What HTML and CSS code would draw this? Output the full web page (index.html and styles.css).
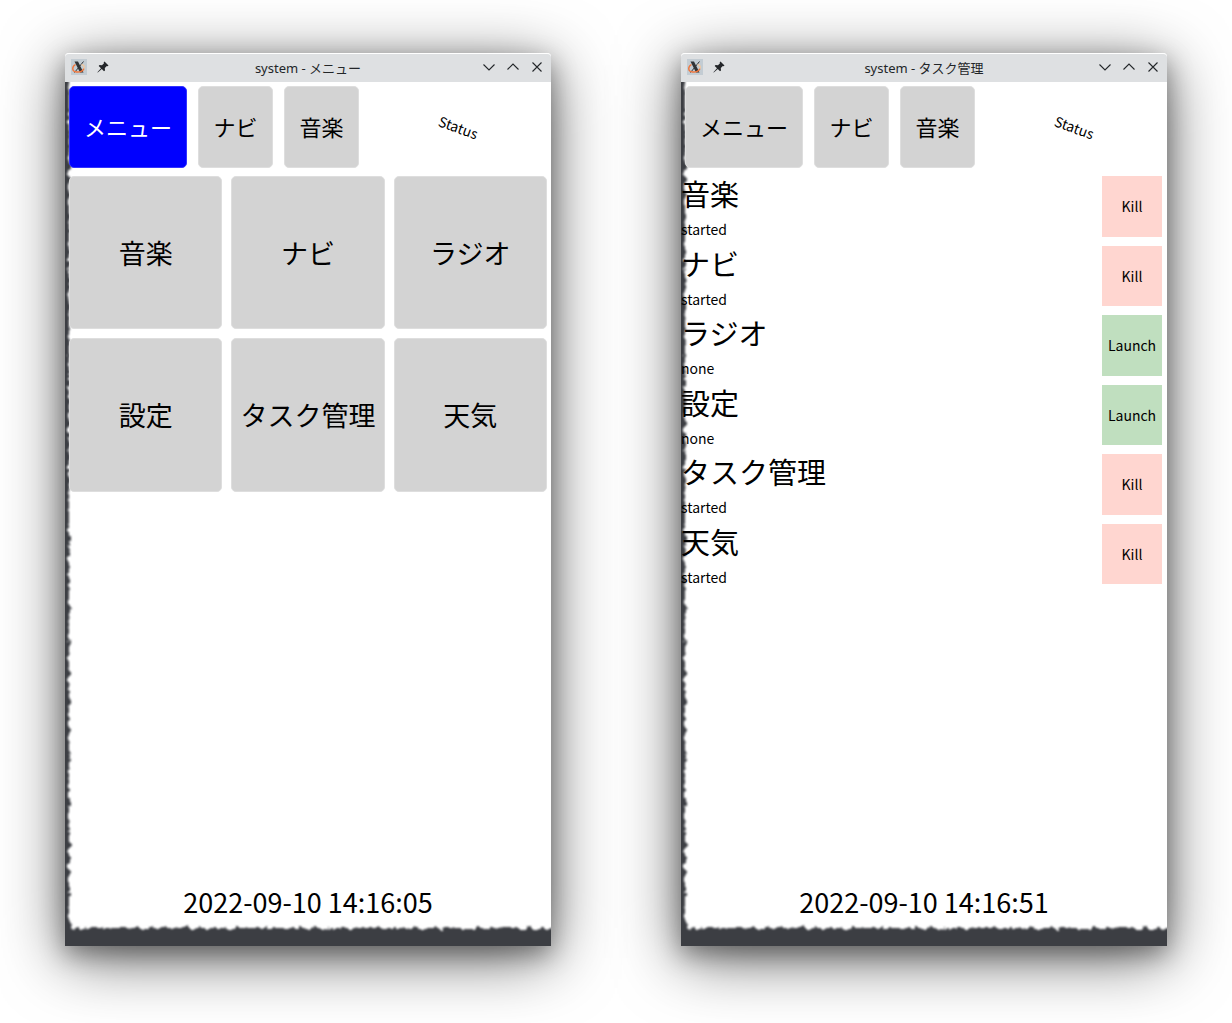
FILE: index.html
```html
<!DOCTYPE html>
<html lang="ja">
<head>
<meta charset="utf-8">
<title>system</title>
<link rel="stylesheet" href="styles.css">
</head>
<body>
<svg class="defs" width="0" height="0" aria-hidden="true">
  <defs>
    <filter id="torn" x="-5%" y="-5%" width="110%" height="110%" color-interpolation-filters="sRGB">
      <feTurbulence type="fractalNoise" baseFrequency="0.14" numOctaves="3" seed="7" result="n"/>
      <feDisplacementMap in="SourceGraphic" in2="n" scale="8" xChannelSelector="R" yChannelSelector="G"/>
      <feGaussianBlur stdDeviation="0.9"/>
    </filter>
    <symbol id="xlogo" viewBox="0 0 16 16">
      <rect width="16" height="16" fill="#c3ccd3"/>
      <path d="M3.500 2.500h3.500l5.500 11h-3.500z" fill="#303336"/>
      <path d="M12.500 2.500L3.500 13.500" stroke="#303336" stroke-width="1"/>
      <path d="M4.500 5.500C.5 8 .8 12.500 5.500 13C9 13.300 12 12 13 9.500" fill="none" stroke="#f0763c" stroke-width="1.400"/>
      <path d="M10.500 5.500Q14 6.500 13 9.500" fill="none" stroke="#edc9a5" stroke-width="1.600"/>
    </symbol>
    <symbol id="pin" viewBox="0 0 12 12">
      <path d="M7.500 .5L11.500 4.500L10.500 5.300L9.800 5L7.800 7L8 9.500L7 10.300L4.800 8L.8 11.500L.4 11.200L4 7.200L1.700 5L2.500 4L5 4.200L7 2.200L6.700 1.300Z" fill="#232629"/>
    </symbol>
    <symbol id="down" viewBox="0 0 12 12"><path d="M.5 3.500L6 9L11.500 3.500" fill="none" stroke="#232629" stroke-width="1.100"/></symbol>
    <symbol id="up" viewBox="0 0 12 12"><path d="M.5 8.500L6 3L11.500 8.500" fill="none" stroke="#232629" stroke-width="1.100"/></symbol>
    <symbol id="close" viewBox="0 0 12 12"><path d="M1.500 1.500L10.500 10.500M10.500 1.500L1.500 10.500" fill="none" stroke="#232629" stroke-width="1.100"/></symbol>
  </defs>
</svg>
<main class="stage">
  <section class="window">
    <header class="titlebar">
      <div class="title-icons">
        <svg class="logo" aria-hidden="true"><use href="#xlogo"/></svg>
        <button class="icon-btn" aria-label="Pin"><svg class="icon"><use href="#pin"/></svg></button>
      </div>
      <h1 class="title">system - メニュー</h1>
      <div class="title-controls">
        <button class="icon-btn" aria-label="Minimize"><svg class="icon"><use href="#down"/></svg></button>
        <button class="icon-btn" aria-label="Maximize"><svg class="icon"><use href="#up"/></svg></button>
        <button class="icon-btn" aria-label="Close"><svg class="icon"><use href="#close"/></svg></button>
      </div>
    </header>
    <div class="body">
      <nav class="tabs">
        <button class="tab active">メニュー</button>
        <button class="tab">ナビ</button>
        <button class="tab">音楽</button>
        <div class="status"><span class="status-text">Status</span></div>
      </nav>
      <div class="tiles">
        <button class="tile">音楽</button>
        <button class="tile">ナビ</button>
        <button class="tile">ラジオ</button>
        <button class="tile">設定</button>
        <button class="tile">タスク管理</button>
        <button class="tile">天気</button>
      </div>
      <footer class="clock"><time>2022-09-10 14:16:05</time></footer>
    </div>
  </section>
  <section class="window">
    <header class="titlebar">
      <div class="title-icons">
        <svg class="logo" aria-hidden="true"><use href="#xlogo"/></svg>
        <button class="icon-btn" aria-label="Pin"><svg class="icon"><use href="#pin"/></svg></button>
      </div>
      <h1 class="title">system - タスク管理</h1>
      <div class="title-controls">
        <button class="icon-btn" aria-label="Minimize"><svg class="icon"><use href="#down"/></svg></button>
        <button class="icon-btn" aria-label="Maximize"><svg class="icon"><use href="#up"/></svg></button>
        <button class="icon-btn" aria-label="Close"><svg class="icon"><use href="#close"/></svg></button>
      </div>
    </header>
    <div class="body">
      <nav class="tabs">
        <button class="tab">メニュー</button>
        <button class="tab">ナビ</button>
        <button class="tab">音楽</button>
        <div class="status"><span class="status-text">Status</span></div>
      </nav>
      <ul class="tasks">
        <li class="task"><div><h2 class="name">音楽</h2><p class="state">started</p></div><button class="action kill">Kill</button></li>
        <li class="task"><div><h2 class="name">ナビ</h2><p class="state">started</p></div><button class="action kill">Kill</button></li>
        <li class="task"><div><h2 class="name">ラジオ</h2><p class="state">none</p></div><button class="action launch">Launch</button></li>
        <li class="task"><div><h2 class="name">設定</h2><p class="state">none</p></div><button class="action launch">Launch</button></li>
        <li class="task"><div><h2 class="name">タスク管理</h2><p class="state">started</p></div><button class="action kill">Kill</button></li>
        <li class="task"><div><h2 class="name">天気</h2><p class="state">started</p></div><button class="action kill">Kill</button></li>
      </ul>
      <footer class="clock"><time>2022-09-10 14:16:51</time></footer>
    </div>
  </section>
</main>
</body>
</html>
```
FILE: styles.css
```css
* { box-sizing: border-box; }
body {
  margin: 0;
  background: #fff;
  color: #000;
  font-family: "Noto Sans CJK JP", sans-serif;
}
button {
  margin: 0;
  padding: 0;
  border: 0;
  background: none;
  color: inherit;
  font: inherit;
}
.defs { position: absolute; }

.stage {
  display: flex;
  gap: 130px;
  min-height: 100vh;
  padding: 53px 65px 77px;
}
.window {
  flex: 1 1 0;
  min-width: 0;
  display: flex;
  flex-direction: column;
  border-radius: 4px 4px 0 0;
  box-shadow: 0 12px 64px rgba(0, 0, 0, .6), 0 8px 24px rgba(0, 0, 0, .35);
}

.titlebar {
  display: grid;
  grid-template-columns: 80px 1fr 80px;
  align-items: center;
  height: 29px;
  padding: 0 8px 2px 6px;
  background: #dee0e2;
  border-top: 1px solid #fff;
  border-radius: 4px 4px 0 0;
}
.title {
  margin: 0;
  padding: 2px 0 0 2px;
  font: 400 13px/18px "Noto Sans", "Noto Sans CJK JP", sans-serif;
  color: #232629;
  text-align: center;
}
.title-icons, .title-controls {
  display: flex;
  align-items: center;
  gap: 12px;
}
.title-controls { justify-content: flex-end; }
.logo { width: 16px; height: 16px; }
.icon-btn, .icon { display: block; width: 12px; height: 12px; }
.title-icons { gap: 10px; }

.body {
  position: relative;
  isolation: isolate;
  flex: 1;
  display: flex;
  flex-direction: column;
  padding: 4px 0 24px;
  overflow: hidden;
  background: #3c3e43;
}
/* torn paper sheet on a dark desk */
.body::before {
  content: "";
  position: absolute;
  z-index: -1;
  inset: -12px -12px 18px 4px;
  background: #fff;
  border-radius: 0 0 0 8px;
  filter: url(#torn);
}

.tabs {
  display: flex;
  gap: 11px;
  height: 82px;
  padding: 0 4px;
}
.tab, .tile {
  background: #d3d3d3;
  border: 1px solid #dedede;
  border-radius: 5px;
}
.tab { min-width: 75px; padding: 0 14px 2px; font-size: 22px; }
.tab.active { background: #00f; border-color: #33f; color: #fff; }
.status {
  flex: 1;
  display: grid;
  place-items: center;
}
.status-text { font-size: 14px; line-height: 20px; transform: rotate(20deg); }

.tiles {
  display: grid;
  grid-template-columns: repeat(3, 1fr);
  gap: 9px;
  padding: 8px 4px 0;
}
.tile { aspect-ratio: 1; font-size: 27px; }

.tasks {
  display: grid;
  grid-template-rows: repeat(6, 1fr);
  height: 417px;
  margin: 8px 0 0;
  padding: 0;
  list-style: none;
}
.task {
  display: flex;
  justify-content: space-between;
  padding-right: 5px;
  min-height: 0;
}
.name { margin: 0 0 4px; font-size: 29px; line-height: 34px; font-weight: 400; }
.state { margin: 0; font-size: 14px; line-height: 31px; }
.action { width: 60px; margin-bottom: 9px; font-size: 14px; }
.kill { background: #ffd6d0; }
.launch { background: #c0dfbf; }

.clock {
  margin-top: auto;
  font-size: 27px;
  line-height: 40px;
  text-align: center;
}
```
